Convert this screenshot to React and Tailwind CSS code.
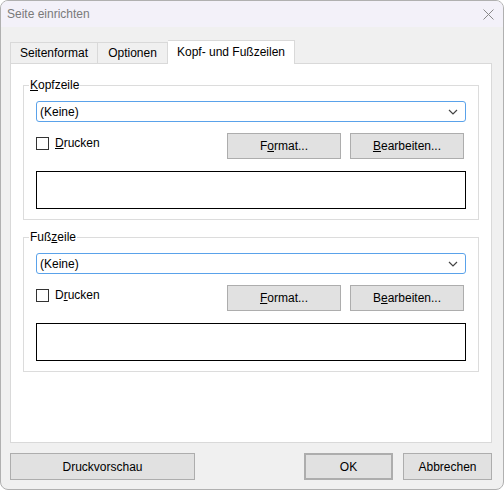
import React from "react";

function Btn({ children, className = "" }) {
  return (
    <div
      className={
        "flex items-center justify-center bg-[#e1e1e1] border border-[#adadad] text-[12px] text-black " +
        className
      }
    >
      <span>{children}</span>
    </div>
  );
}

function Combo() {
  return (
    <div className="h-[21px] border border-[#5aa2ea] rounded-[3px] bg-white flex items-center pl-[3px] pr-[6px] text-[12px] text-black">
      <span className="flex-1">(Keine)</span>
      <svg width="10" height="6" viewBox="0 0 10 6" className="mr-[1px]">
        <path d="M1 1 L5 5 L9 1" fill="none" stroke="#444" strokeWidth="1.2" />
      </svg>
    </div>
  );
}

function Group({ legend, drucken, format, bearbeiten, className = "" }) {
  return (
    <div className={"relative border border-[#dcdcdc] px-[12px] pt-[15px] pb-[10px] " + className}>
      <span className="absolute left-[5px] top-[-8px] px-[1px] bg-white text-[12px] leading-[15px] text-black">
        {legend}
      </span>
      <Combo />
      <div className="mt-[11px] flex items-center h-[26px]">
        <div className="flex items-center self-start mt-[3px]">
          <div className="w-[13px] h-[13px] border border-[#333] bg-white" />
          <span className="ml-[6px] text-[12px] text-black leading-[14px]">{drucken}</span>
        </div>
        <div className="ml-auto mr-[2px] flex gap-[9px]">
          <Btn className="w-[114px] h-[26px]">{format}</Btn>
          <Btn className="w-[114px] h-[26px]">{bearbeiten}</Btn>
        </div>
      </div>
      <div className="mt-[12px] h-[38px] border border-black bg-white" />
    </div>
  );
}

export default function App() {
  return (
    <div
      className="w-[504px] h-[490px] overflow-hidden rounded-[8px] border border-[#b0b0b0] bg-[#f0f0f0] flex flex-col"
      style={{ fontFamily: '"Liberation Sans", Arial, sans-serif' }}
    >
      <div className="h-[26px] bg-[#f3f1f9] flex items-center pl-[6px] pr-[9px] shrink-0">
        <span className="text-[12px] text-[#7a7a7a] flex-1">Seite einrichten</span>
        <svg width="11" height="11" viewBox="0 0 11 11">
          <path d="M0.5 0.5 L10.5 10.5 M10.5 0.5 L0.5 10.5" stroke="#888" strokeWidth="1" />
        </svg>
      </div>
      <div className="pt-[13px] pl-[9px] pr-[11px] flex flex-col">
        <div className="flex items-end h-[23px] text-[12px] text-black">
          <div className="h-[21px] w-[88px] border border-b-0 border-[#d9d9d9] bg-[#f0f0f0] flex items-center justify-center">
            Seitenformat
          </div>
          <div className="h-[21px] w-[70px] border border-b-0 border-l-0 border-[#d9d9d9] bg-[#f0f0f0] flex items-center justify-center">
            Optionen
          </div>
          <div className="relative z-10 mb-[-1px] h-[24px] w-[127px] border border-b-0 border-l-0 border-[#d9d9d9] bg-white flex items-center justify-center pb-[1px]">
            Kopf- und Fußzeilen
          </div>
        </div>
        <div className="h-[380px] bg-white border border-[#d9d9d9] pt-[21px] px-[12px]">
          <Group
            legend={<><u>K</u>opfzeile</>}
            drucken={<><u>D</u>rucken</>}
            format={<>F<u>o</u>rmat...</>}
            bearbeiten={<><u>B</u>earbeiten...</>}
          />
          <Group
            className="mt-[17px]"
            legend={<>Fuß<u>z</u>eile</>}
            drucken={<>D<u>r</u>ucken</>}
            format={<><u>F</u>ormat...</>}
            bearbeiten={<>B<u>e</u>arbeiten...</>}
          />
        </div>
        <div className="mt-[10px] flex h-[27px]">
          <Btn className="w-[185px] h-[27px]">Druckvorschau</Btn>
          <Btn className="ml-auto w-[89px] h-[27px] border-2 border-[#0078d7]">OK</Btn>
          <Btn className="ml-[10px] w-[89px] h-[27px]">Abbrechen</Btn>
        </div>
      </div>
    </div>
  );
}
